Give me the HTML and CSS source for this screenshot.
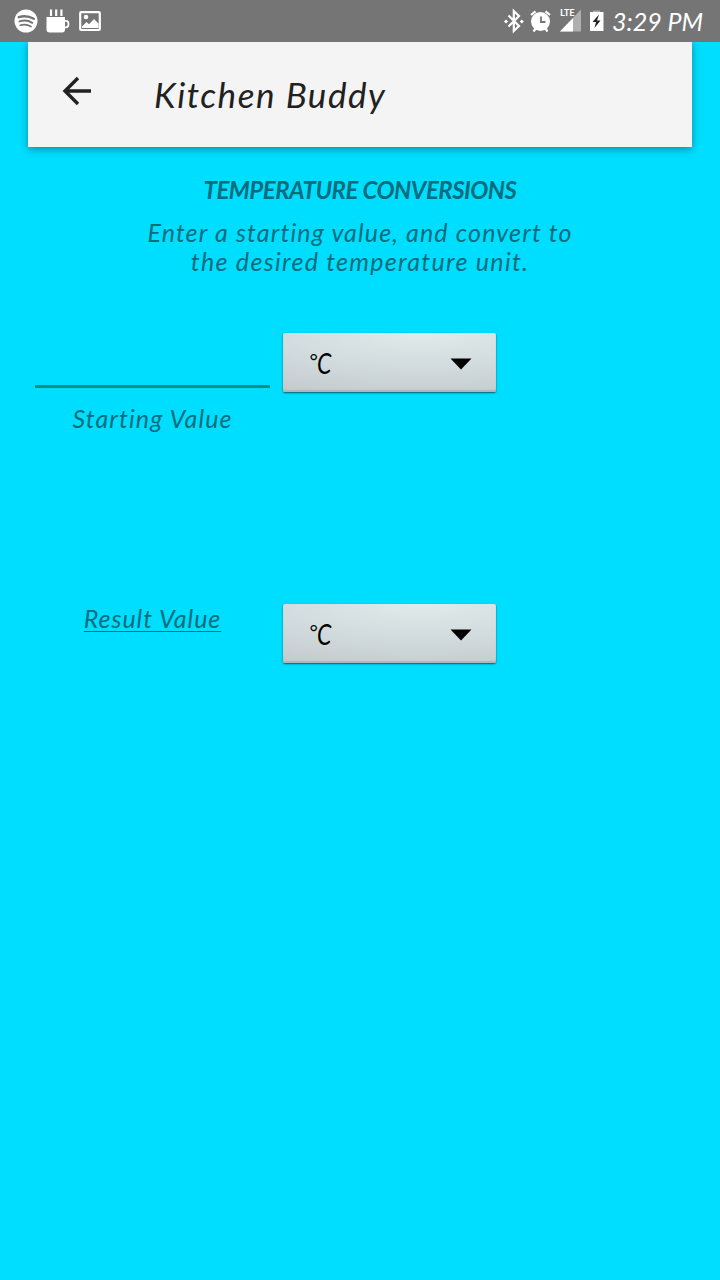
FILE: index.html
```html
<!DOCTYPE html>
<html lang="en">
<head>
<meta charset="utf-8">
<title>Kitchen Buddy</title>
<link rel="stylesheet" href="styles.css">
</head>
<body>
<header class="status">
  <svg class="status-icons" width="120" height="42" viewBox="0 0 120 42">
    <circle cx="26" cy="21" r="11.5" fill="#fff"/>
    <g fill="none" stroke="#757575" stroke-linecap="round">
      <path d="M18.8 17.2Q26.5 14.8 33.8 18.8" stroke-width="2.4"/>
      <path d="M19.5 21.4Q26.5 19.3 32.3 22.8" stroke-width="2"/>
      <path d="M20.2 25.2Q26 23.6 31 26.5" stroke-width="1.7"/>
    </g>
    <path d="M46.5 17H65V29.500Q65 32.500 62 32.500H49.500Q46.500 32.500 46.500 29.500Z" fill="#fff"/>
    <path d="M64 20.800H66Q68.500 20.800 68.500 24T66 27.300H64" fill="none" stroke="#fff" stroke-width="1.800"/>
    <path d="M51 9.500V16M56.200 9.500V16M61.400 9.500V16" stroke="#fff" stroke-width="2.200"/>
    <rect x="80.200" y="12.200" width="19.600" height="17.800" rx="1" fill="none" stroke="#fff" stroke-width="2.200"/>
    <circle cx="86" cy="17" r="2.300" fill="#fff"/>
    <path d="M82 28V26.500L86.500 22L89 24.200L94 19L98.500 23.500V28Z" fill="#fff"/>
  </svg>
  <div class="status-right">
    <svg width="110" height="42" viewBox="500 0 110 42">
      <path d="M508.500 15.500L519 26L513.800 31V11L519 16L508.500 26.500" fill="none" stroke="#fff" stroke-width="2.200"/>
      <path d="M504 21.500L506 19.500L508 21.500L506 23.500ZM519.800 21.500L521.800 19.500L523.800 21.500L521.800 23.500Z" fill="#fff"/>
      <circle cx="540.500" cy="21.500" r="9.500" fill="#fff"/>
      <path d="M531 15L535.500 11.300M545.500 11.300L550 15M533.500 31.500L536 28M547.500 31.500L545 28" stroke="#fff" stroke-width="2.200"/>
      <path d="M541 16.500V22H545.500" fill="none" stroke="#757575" stroke-width="1.800"/>
      <path d="M581 9.500V31.500H560Z" fill="#b0b0b0"/>
      <path d="M560 8H575.500V15L570 21H560Z" fill="#757575"/>
      <path d="M573 17.900V31.500H560Z" fill="#fff"/>
      <text class="lte" x="560.300" y="16.200" textLength="14" lengthAdjust="spacingAndGlyphs">LTE</text>
      <path d="M593 10.500H600V12.500H593Z" fill="#aaa"/>
      <path d="M590 12H603.500V31H590Z" fill="#fff"/>
      <path d="M599 14.500L592.500 22H596L594.500 28L600.500 20.500H597Z" fill="#222"/>
    </svg>
    <span class="clock">3:29 PM</span>
  </div>
</header>
<nav class="appbar">
  <svg class="back" width="30" height="30" viewBox="0 0 30 30"><path d="M29 15H3M16 2L3 15L16 28" fill="none" stroke="#212121" stroke-width="3.4"/></svg>
  <h1 class="title">Kitchen Buddy</h1>
</nav>
<main class="content">
  <h2 class="heading">TEMPERATURE CONVERSIONS</h2>
  <p class="intro"><span class="intro-a">Enter a starting value, and convert to</span><br><span class="intro-b">the desired temperature unit.</span></p>
  <section class="row row-start">
    <label class="field"><span class="line"></span><span class="starting">Starting Value</span></label>
    <button class="spinner"><span class="unit"><span class="degree">°</span><span class="letter">C</span></span><svg width="22" height="12" viewBox="0 0 22 12"><path d="M.5 .5H21.500L11 11.500Z"/></svg></button>
  </section>
  <section class="row row-result">
    <div class="field"><span class="result">Result Value</span></div>
    <button class="spinner"><span class="unit"><span class="degree">°</span><span class="letter">C</span></span><svg width="22" height="12" viewBox="0 0 22 12"><path d="M.5 .5H21.500L11 11.500Z"/></svg></button>
  </section>
</main>
</body>
</html>
```
FILE: styles.css
```css
* { box-sizing: border-box; }
body {
  margin: 0;
  width: 720px;
  height: 1280px;
  overflow: hidden;
  background: #00deff;
  color: #046c7c;
  font-family: Lato, "Open Sans", sans-serif;
  font-style: italic;
}
.status {
  position: relative;
  z-index: 1;
  display: flex;
  justify-content: space-between;
  height: 42px;
  background: #757575;
  color: #fff;
}
.status-right { display: flex; width: 220px; }
.status-right svg, .status-icons { flex: none; display: block; }
.lte { font: bold 8.5px Roboto, sans-serif; fill: #fff; }
.clock {
  padding-left: 2px;
  font-size: 25px;
  line-height: 42px;
  white-space: nowrap;
}
.appbar {
  display: flex;
  height: 105px;
  margin: 0 28px;
  padding: 34px 0 0 34px;
  background: #f4f4f4;
  box-shadow: 0 2px 8px rgba(0, 60, 75, .5);
}
.back { flex: none; }
.title {
  margin: -3px 0 0 62px;
  color: #212121;
  font-size: 35px;
  font-weight: 400;
  letter-spacing: 1.5px;
  line-height: 42px;
  white-space: nowrap;
}
.content { padding: 28px 28px 0 35px; }
.heading {
  margin: 0 7px 0 0;
  font-size: 24px;
  letter-spacing: -.5px;
  line-height: 30px;
  text-align: center;
  white-space: nowrap;
}
.intro {
  margin: 13px 7px 0 0;
  font-size: 25px;
  line-height: 29px;
  text-align: center;
  white-space: nowrap;
}
.intro-a { letter-spacing: 1.15px; }
.intro-b { letter-spacing: 1.3px; }
.row { display: flex; gap: 13px; }
.row-start { margin-top: 57px; height: 271px; }
.field {
  display: flex;
  flex-direction: column;
  align-items: center;
  width: 235px;
  font-size: 25px;
  line-height: 28px;
  white-space: nowrap;
}
.line { width: 235px; height: 3px; margin: 52px 0 16px; background: #079184; }
.starting { letter-spacing: 1.1px; }
.result {
  letter-spacing: .95px;
  text-decoration: underline;
  text-decoration-thickness: 1px;
  text-decoration-skip-ink: none;
  text-underline-offset: 3px;
}
.spinner {
  display: flex;
  align-items: center;
  justify-content: space-between;
  width: 213px;
  height: 59px;
  padding: 3px 24px 0 26px;
  border: 0;
  border-radius: 2px;
  background: radial-gradient(ellipse 130% 110% at 65% 0, #e0ebeb 0, #d1dadc 55%, #c3cbcd 100%);
  box-shadow: 0 1px 2px rgba(0, 45, 55, .75), inset 0 -2px 1px #adb7b9;
  color: #000;
  font: italic 28px Lato, sans-serif;
}
.unit { display: inline-flex; margin-top: -3px; line-height: 34px; }
.degree { font-size: 20px; line-height: 28px; }
.letter { display: inline-block; transform: scaleX(.82); transform-origin: left; }
```
